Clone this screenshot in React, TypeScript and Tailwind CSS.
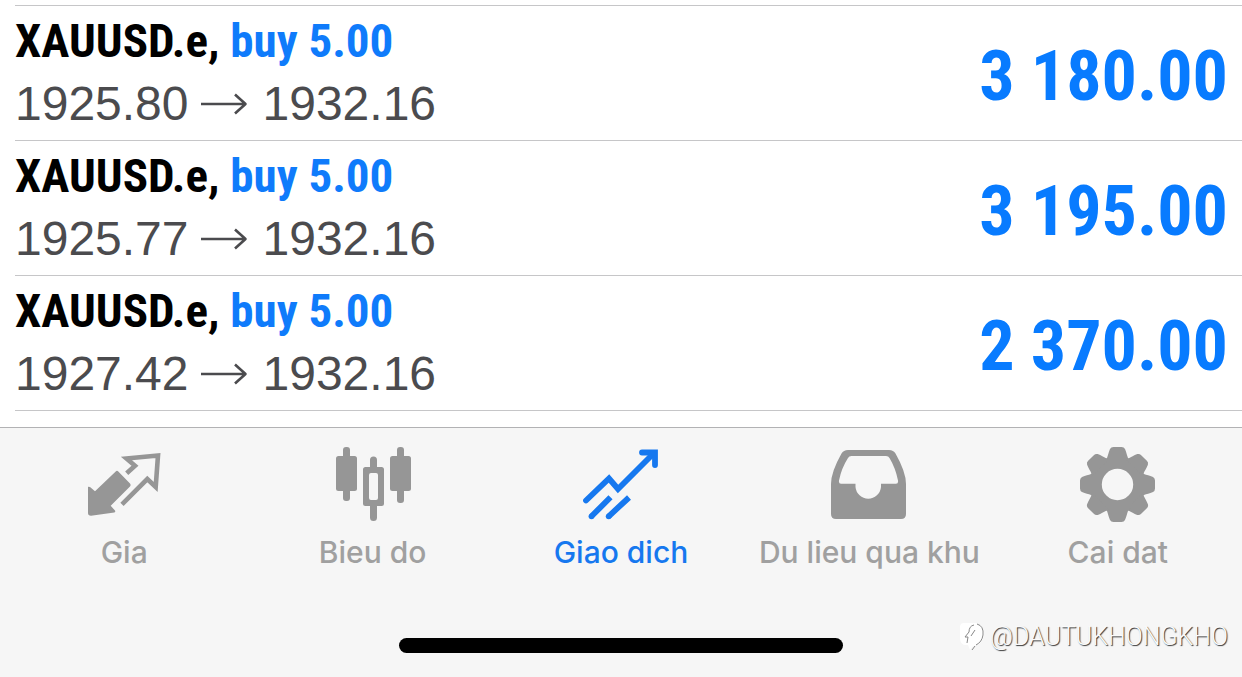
import type { ReactNode } from "react";

type Position = {
  symbol: string;
  side: string;
  volume: string;
  open: string;
  current: string;
  profit: string;
};

const positions: Position[] = [
  { symbol: "XAUUSD.e", side: "buy", volume: "5.00", open: "1925.80", current: "1932.16", profit: "3 180.00" },
  { symbol: "XAUUSD.e", side: "buy", volume: "5.00", open: "1925.77", current: "1932.16", profit: "3 195.00" },
  { symbol: "XAUUSD.e", side: "buy", volume: "5.00", open: "1927.42", current: "1932.16", profit: "2 370.00" },
];

function Arrow() {
  return (
    <svg className="mr-3.5 ml-3 h-6 w-12 shrink-0" viewBox="0 0 48 24" fill="none" stroke="currentColor" strokeWidth="2.6" role="img" aria-label="to">
      <path d="M0 12H44M34 2.500L44.500 12L34 21.500" strokeLinejoin="round" />
    </svg>
  );
}

function PositionRow({ item }: { item: Position }) {
  return (
    <li className="flex h-[135px] shrink-0 items-start justify-between border-t border-[#c6c6c8] pr-3.5">
      <div className="pt-1">
        <p className="font-['Roboto_Condensed','Liberation_Sans',sans-serif] text-[47px] leading-[62px] font-bold text-black">
          {item.symbol}, <span className="text-[#0f7bfb]">{item.side} {item.volume}</span>
        </p>
        <p className="flex items-center text-5xl leading-[64px] text-[#4b4b4e]">
          {item.open}
          <Arrow />
          {item.current}
        </p>
      </div>
      <p className="pt-[34px] font-['Roboto_Condensed','Liberation_Sans',sans-serif] text-[70px] leading-[72px] font-bold text-[#087bff]">
        {item.profit}
      </p>
    </li>
  );
}

function Icon({ children }: { children: ReactNode }) {
  return (
    <svg className="size-[76px]" viewBox="0 0 76 76" fill="currentColor" aria-hidden="true">
      {children}
    </svg>
  );
}

const toothAngles = [0, 45, 90, 135, 180, 225, 270, 315];

const tabs: { label: string; active?: boolean; icon: ReactNode }[] = [
  {
    label: "Gia",
    icon: (
      <Icon>
        <path d="M2 40.7L4 41L9 45.3L29.7 25.4Q31 24.2 32.3 25.4L44 37.6Q45.2 39 44 40.4L24.7 59.7L29 64.6Q29.8 66 28.3 66.4L5 69.7Q2 69.7 2 67Z" />
        <path d="M40.700 27.300L49 19.700L40.500 12.500L72 9.500L69.700 41L61.300 33L36 58.300" fill="none" stroke="currentColor" strokeWidth="4.600" strokeLinejoin="miter" />
      </Icon>
    ),
  },
  {
    label: "Bieu do",
    icon: (
      <Icon>
        <rect x="1" y="10" width="21" height="35" rx="2.5" />
        <rect x="8" y="1" width="7" height="54" rx="3" />
        <rect x="55" y="10" width="21" height="35" rx="2.5" />
        <rect x="62" y="1" width="7" height="56" rx="3" />
        <path fillRule="evenodd" d="M30.5 21H35V14A3.5 3.5 0 0 1 42 14V21H46.500Q49 21 49 23.500V57.500Q49 60 46.500 60H42V71.500A3.500 3.500 0 0 1 35 71.500V60H30.500Q28 60 28 57.500V23.500Q28 21 30.500 21ZM36 27Q34 27 34 29V52Q34 54 36 54H41Q43 54 43 52V29Q43 27 41 27Z" />
      </Icon>
    ),
  },
  {
    label: "Giao dich",
    active: true,
    icon: (
      <Icon>
        <g fill="none" stroke="currentColor" strokeWidth="5.8">
          <path d="M3 54.500L26 32.500L35 43L71 7" strokeLinecap="round" />
          <path d="M59 6.500H72V19" strokeLinecap="round" strokeLinejoin="miter" />
          <path d="M8.500 70.300L27.500 51.300M25.700 70.300L46 51.500" />
        </g>
        <circle cx="8.500" cy="70.300" r="2.900" />
        <circle cx="25.700" cy="70.300" r="2.900" />
      </Icon>
    ),
  },
  {
    label: "Du lieu qua khu",
    icon: (
      <Icon>
        <path fillRule="evenodd" d="M17 4H58Q62.500 4 64.500 7.500Q75 26 75 38V68Q75 73 70 73H5Q0 73 0 68V38Q0 26 10.500 7.500Q12.500 4 17 4ZM20.500 10Q18 10 17 12Q10.500 22 8 34.500Q7.500 37.700 10 37.700H24.500V41A12.800 12.800 0 0 0 50 41V37.700H65Q67.500 37.700 67 34.500Q64.500 22 58.500 12Q57.500 10 55 10Z" />
      </Icon>
    ),
  },
  {
    label: "Cai dat",
    icon: (
      <Icon>
        <g transform="translate(37.500 38.500)">
          <circle r="21.700" fill="none" stroke="currentColor" strokeWidth="12" />
          {toothAngles.map((angle) => (
            <path
              key={angle}
              transform={`rotate(${angle})`}
              d="M-13 -23.500L-10.500 -26.500C-9.500 -29 -9 -32 -7.500 -35.500Q-6.500 -37.500 -4 -37.500H4Q6.500 -37.500 7.500 -35.500C9 -32 9.500 -29 10.500 -26.500L13 -23.500Z"
            />
          ))}
        </g>
      </Icon>
    ),
  },
];

export default function App() {
  return (
    <div className="relative flex h-screen flex-col overflow-hidden bg-white font-['Liberation_Sans',Arial,sans-serif]">
      <main className="min-h-0 flex-1 overflow-hidden pt-[5px] pl-[15px]">
        <ul className="flex flex-col border-b border-[#c6c6c8]">
          {positions.map((item, index) => (
            <PositionRow key={index} item={item} />
          ))}
        </ul>
      </main>

      <footer className="shrink-0 border-t border-[#b2b2b4] bg-[#f6f6f6] pt-[18px] pb-6">
        <nav className="grid grid-cols-5">
          {tabs.map((tab) => (
            <a
              key={tab.label}
              href="#"
              aria-current={tab.active ? "page" : undefined}
              className={`flex flex-col items-center gap-3 ${tab.active ? "text-[#1678ef]" : "text-[#969696]"}`}
            >
              {tab.icon}
              <span className={`font-['Inter',sans-serif] text-[30px] leading-9 font-medium whitespace-nowrap ${tab.active ? "" : "text-[#a0a0a0]"}`}>{tab.label}</span>
            </a>
          ))}
        </nav>
        <div className="mx-auto mt-[68px] h-[15px] w-[444px] rounded-full bg-black" />
      </footer>

      <div className="absolute right-3.5 bottom-6 flex items-center gap-1.5 text-[#fafafa]">
        <svg className="h-7 w-6" viewBox="0 0 24 28" aria-hidden="true">
          <path d="M4 0H16Q24 2 24 12Q23 21 13 23L10 27L8 22Q0 23 0 15V4Q0 0 4 0Z" fill="#fff" />
          <path d="M17 1Q24 3 23 12Q22 19 16 22M12 27L15 23M14 2Q9 3 9 9L5 14H8L7 20M11 13L15 7" fill="none" stroke="#888" strokeWidth="1" />
        </svg>
        <span className="font-['Roboto',sans-serif] text-[25px] leading-8 font-light [text-shadow:1px_1px_1px_#333]">@DAUTUKHONGKHO</span>
      </div>
    </div>
  );
}
